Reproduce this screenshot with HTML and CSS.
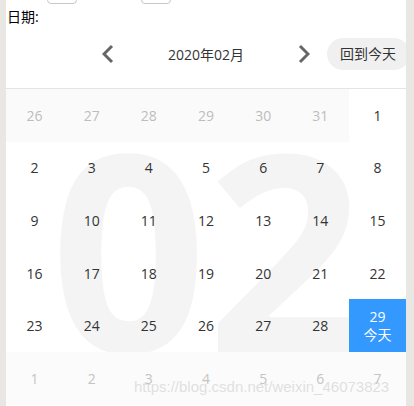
FILE: index.html
```html
<!DOCTYPE html>
<html lang="zh-CN">
<head>
<meta charset="utf-8">
<title>日历</title>
<link rel="stylesheet" href="styles.css">
</head>
<body>
<div class="page">
  <div class="inputs">
    <span class="box box-a"></span>
    <span class="box box-b"></span>
  </div>
  <div class="label">日期:</div>
  <div class="header">
    <div class="nav">
      <svg class="arrow" width="12" height="20" viewBox="0 0 12 20"><polyline points="10,2 2,10 10,18" fill="none" stroke="#666" stroke-width="3"/></svg>
      <span class="title">2020年02月</span>
      <svg class="arrow" width="12" height="20" viewBox="0 0 12 20"><polyline points="2,2 10,10 2,18" fill="none" stroke="#666" stroke-width="3"/></svg>
    </div>
    <div class="today-btn">回到今天</div>
  </div>
  <div class="calendar">
    <div class="watermark" aria-hidden="true">02</div>
    <div class="grid">
      <div class="cell other">26</div>
      <div class="cell other">27</div>
      <div class="cell other">28</div>
      <div class="cell other">29</div>
      <div class="cell other">30</div>
      <div class="cell other">31</div>
      <div class="cell">1</div>
      <div class="cell">2</div>
      <div class="cell">3</div>
      <div class="cell">4</div>
      <div class="cell">5</div>
      <div class="cell">6</div>
      <div class="cell">7</div>
      <div class="cell">8</div>
      <div class="cell">9</div>
      <div class="cell">10</div>
      <div class="cell">11</div>
      <div class="cell">12</div>
      <div class="cell">13</div>
      <div class="cell">14</div>
      <div class="cell">15</div>
      <div class="cell">16</div>
      <div class="cell">17</div>
      <div class="cell">18</div>
      <div class="cell">19</div>
      <div class="cell">20</div>
      <div class="cell">21</div>
      <div class="cell">22</div>
      <div class="cell">23</div>
      <div class="cell">24</div>
      <div class="cell">25</div>
      <div class="cell">26</div>
      <div class="cell">27</div>
      <div class="cell">28</div>
      <div class="cell today"><span>29</span><span>今天</span></div>
      <div class="cell other next">1</div>
      <div class="cell other next">2</div>
      <div class="cell other next">3</div>
      <div class="cell other next">4</div>
      <div class="cell other next">5</div>
      <div class="cell other next">6</div>
      <div class="cell other next">7</div>
    </div>
  </div>
  <div class="credit">https://blog.csdn.net/weixin_46073823</div>
</div>
</body>
</html>
```

FILE: styles.css
```css
html, body {
  margin: 0;
  padding: 0;
  background: #e8e7e4;
}
body {
  font-family: "Open Sans", "Noto Sans CJK SC", sans-serif;
  width: 414px;
  height: 406px;
  overflow: hidden;
}
.page {
  position: relative;
  margin-left: 6px;
  width: 400px;
  height: 406px;
  background: #fff;
  overflow: hidden;
}
.inputs {
  display: flex;
  height: 30px;
  margin-top: -26px;
  padding-left: 41px;
  gap: 64px;
}
.box {
  display: block;
  width: 28px;
  height: 28px;
  border: 1px solid #c8c8c8;
  border-radius: 4px;
  box-sizing: content-box;
}
.label {
  margin-top: 4px;
  padding-left: 1px;
  font-size: 14px;
  line-height: 18px;
  height: 18px;
  color: #000;
}
.header {
  display: grid;
  grid-template-columns: minmax(0, 1fr) auto minmax(0, 1fr);
  align-items: center;
  padding: 12px 0 18px;
  height: 32px;
  border-bottom: 1px solid #e4e4e4;
}
.nav {
  grid-column: 2;
  display: flex;
  align-items: center;
  gap: 54px;
}
.arrow {
  display: block;
}
.title {
  font-size: 14px;
  color: #333;
  white-space: nowrap;
}
.today-btn {
  grid-column: 3;
  justify-self: start;
  margin-left: 17px;
  height: 32px;
  line-height: 32px;
  padding: 0 14px 0 13px;
  border-radius: 16px;
  background: #f0f0f0;
  color: #333;
  font-size: 14px;
  white-space: nowrap;
}
.calendar {
  position: relative;
}
.watermark {
  position: absolute;
  inset: 0;
  display: flex;
  align-items: center;
  justify-content: center;
  margin: -2px 0 0 2px;
  font-family: "Open Sans", sans-serif;
  font-weight: 700;
  font-size: 274px;
  line-height: 1;
  color: #f4f4f4;
  z-index: 0;
  pointer-events: none;
}
.grid {
  position: relative;
  z-index: 1;
  display: grid;
  grid-template-columns: repeat(7, 1fr);
  grid-auto-rows: 52.6px;
}
.cell {
  display: flex;
  flex-direction: column;
  align-items: center;
  justify-content: center;
  font-size: 14px;
  color: #333;
}
.cell.other {
  background: #fafafa;
  color: #bdbdbd;
}
.cell.next {
  background: #fbfbfb;
  color: #c4c4c4;
}
.cell.today {
  background: #3399ff;
  color: #fff;
  line-height: 18px;
}
.credit {
  position: absolute;
  left: 128px;
  top: 378px;
  font-family: "Liberation Sans", Arial, sans-serif;
  font-size: 15px;
  color: rgba(200, 200, 200, 0.55);
  white-space: nowrap;
  z-index: 2;
}
```
